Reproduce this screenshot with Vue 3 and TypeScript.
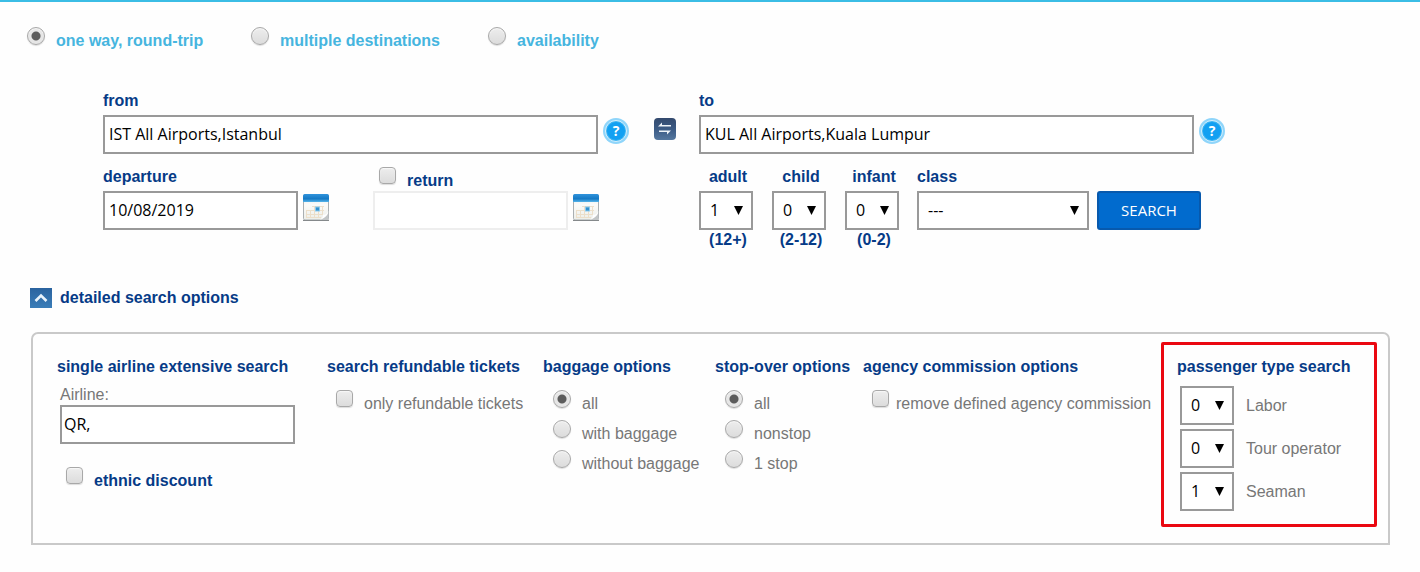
<script setup lang="ts">
import { ref } from 'vue'

const modes = ['one way, round-trip', 'multiple destinations', 'availability']
const mode = ref(modes[0])

const origin = ref('IST All Airports,Istanbul')
const destination = ref('KUL All Airports,Kuala Lumpur')
const departure = ref('10/08/2019')
const returning = ref(false)
const returnDate = ref('')

const passengers = ref([
  { id: 'adult', age: '(12+)', count: 1 },
  { id: 'child', age: '(2-12)', count: 0 },
  { id: 'infant', age: '(0-2)', count: 0 },
])
const cabin = ref('---')

const expanded = ref(true)
const airline = ref('QR,')
const ethnic = ref(false)
const refundable = ref(false)
const removeCommission = ref(false)

const baggageChoices = ['all', 'with baggage', 'without baggage']
const baggage = ref('all')
const stopChoices = ['all', 'nonstop', '1 stop']
const stops = ref('all')

const passengerTypes = ref([
  { id: 'labor', label: 'Labor', count: 0 },
  { id: 'tour', label: 'Tour operator', count: 0 },
  { id: 'seaman', label: 'Seaman', count: 1 },
])

function swap() {
  const previous = origin.value
  origin.value = destination.value
  destination.value = previous
}
</script>

<template>
  <main class="page">
    <svg class="defs" width="0" height="0" aria-hidden="true">
      <defs>
        <linearGradient id="cal-head" x1="0" y1="0" x2="0" y2="1">
          <stop offset="0" stop-color="#2f93dc" />
          <stop offset="0.6" stop-color="#1579c4" />
          <stop offset="1" stop-color="#55b4ea" />
        </linearGradient>
        <linearGradient id="cal-page" x1="0" y1="0" x2="0" y2="1">
          <stop offset="0" stop-color="#e3eaee" />
          <stop offset="0.4" stop-color="#fbfbf9" />
          <stop offset="1" stop-color="#eceee9" />
        </linearGradient>
        <linearGradient id="swap-bg" x1="0" y1="0" x2="0" y2="1">
          <stop offset="0" stop-color="#33496d" />
          <stop offset="0.5" stop-color="#3c5b85" />
          <stop offset="1" stop-color="#55779f" />
        </linearGradient>
        <linearGradient id="fold-bg" x1="0" y1="0" x2="0" y2="1">
          <stop offset="0" stop-color="#2a639f" />
          <stop offset="1" stop-color="#3a7db8" />
        </linearGradient>
        <symbol id="calendar" viewBox="0 0 26 27">
          <rect x="0.5" y="0.5" width="25" height="25.5" rx="1.5" fill="url(#cal-page)" stroke="#a9afb2" />
          <path d="M0 8V2Q0 0 2 0H24Q26 0 26 2V8Z" fill="url(#cal-head)" />
          <path d="M9 12.500H21M3 16.500H21M3 20.500H20M3 23.500H18M3.500 16V24M7.500 16V24M11.500 12V24M15.500 12V24M19.500 12V21" stroke="#ecdfca" fill="none" />
          <rect x="12" y="12.500" width="5" height="5" fill="#8fcbed" />
          <rect x="13" y="13.500" width="3" height="3" fill="#3291cf" />
          <path d="M18 26L25.500 18V26Z" fill="#c3c6c7" />
          <path d="M17 26Q20.500 23 20 20.500Q23 21.500 25.500 17Q25 23 17 26Z" fill="#fff" />
          <path d="M0 26.500H26" stroke="#85898b" />
        </symbol>
      </defs>
    </svg>

    <form @submit.prevent>
      <div class="modes" role="radiogroup" aria-label="trip type">
        <label v-for="m in modes" :key="m" class="toggle strong">
          <input v-model="mode" type="radio" name="mode" :value="m" />
          <span>{{ m }}</span>
        </label>
      </div>

      <div class="route">
        <section class="half">
          <div class="field">
            <label class="caption" for="origin">from</label>
            <div class="with-icon">
              <input id="origin" v-model="origin" class="box" type="text" />
              <button type="button" class="icon help" aria-label="help with origin">
                <svg width="26" height="26" viewBox="0 0 26 26">
                  <circle cx="13" cy="13" r="13" fill="#8fd5fa" />
                  <circle cx="13" cy="13" r="10.500" fill="#3cb4f3" stroke="#d8f1fd" />
                  <circle cx="13" cy="13" r="9" fill="#12a0f2" />
                  <text x="13" y="18" text-anchor="middle">?</text>
                </svg>
              </button>
            </div>
          </div>
          <div class="dates">
            <div class="field">
              <label class="caption" for="departure">departure</label>
              <div class="with-icon">
                <input id="departure" v-model="departure" class="box" type="text" />
                <button type="button" class="icon calendar" aria-label="choose departure date">
                  <svg width="26" height="27"><use href="#calendar" /></svg>
                </button>
              </div>
            </div>
            <div class="field">
              <div class="caption-toggle">
                <label class="toggle strong navy">
                  <input v-model="returning" type="checkbox" />
                  <span>return</span>
                </label>
              </div>
              <div class="with-icon">
                <input v-model="returnDate" class="box" type="text" aria-label="return date" :disabled="!returning" />
                <button type="button" class="icon calendar" aria-label="choose return date">
                  <svg width="26" height="27"><use href="#calendar" /></svg>
                </button>
              </div>
            </div>
          </div>
        </section>

        <button type="button" class="icon swap" aria-label="swap airports" @click="swap">
          <svg width="22" height="22" viewBox="0 0 22 22">
            <rect width="22" height="22" rx="4" fill="url(#swap-bg)" />
            <path d="M4 8.500L8 4.500V7H17V8.500Z" fill="#eef3f8" />
            <path d="M17 12.500H5V14H13V16.500Z" fill="#eef3f8" />
          </svg>
        </button>

        <section class="half">
          <div class="field">
            <label class="caption" for="destination">to</label>
            <div class="with-icon">
              <input id="destination" v-model="destination" class="box" type="text" />
              <button type="button" class="icon help" aria-label="help with destination">
                <svg width="26" height="26" viewBox="0 0 26 26">
                  <circle cx="13" cy="13" r="13" fill="#8fd5fa" />
                  <circle cx="13" cy="13" r="10.500" fill="#3cb4f3" stroke="#d8f1fd" />
                  <circle cx="13" cy="13" r="9" fill="#12a0f2" />
                  <text x="13" y="18" text-anchor="middle">?</text>
                </svg>
              </button>
            </div>
          </div>
          <div class="travel">
            <div class="counts">
              <div v-for="p in passengers" :key="p.id" class="count">
                <label class="caption" :for="p.id">{{ p.id }}</label>
                <span class="select">
                  <select :id="p.id" v-model="p.count" class="box">
                    <option v-for="n in 10" :key="n" :value="n - 1">{{ n - 1 }}</option>
                  </select>
                  <svg class="arrow" width="9" height="9" viewBox="0 0 9 9"><path d="M0 0H9L4.500 9Z" /></svg>
                </span>
                <span class="age">{{ p.age }}</span>
              </div>
            </div>
            <div class="cabin">
              <label class="caption" for="cabin">class</label>
              <span class="select">
                <select id="cabin" v-model="cabin" class="box">
                  <option>---</option>
                </select>
                <svg class="arrow" width="9" height="9" viewBox="0 0 9 9"><path d="M0 0H9L4.500 9Z" /></svg>
              </span>
            </div>
            <button type="submit" class="search">SEARCH</button>
          </div>
        </section>
      </div>

      <button type="button" class="fold" :aria-expanded="expanded" @click="expanded = !expanded">
        <svg width="22" height="20" viewBox="0 0 22 20">
          <rect width="22" height="20" fill="url(#fold-bg)" />
          <path d="M5.500 13L11 7.500L16.500 13" fill="none" stroke="#e9f3fb" stroke-width="2.600" />
        </svg>
        <span>detailed search options</span>
      </button>

      <div v-show="expanded" class="panel">
        <section class="column">
          <h2>single airline extensive search</h2>
          <div class="airline">
            <label for="airline">Airline:</label>
            <input id="airline" v-model="airline" class="box" type="text" />
          </div>
          <label class="toggle strong navy ethnic">
            <input v-model="ethnic" type="checkbox" />
            <span>ethnic discount</span>
          </label>
        </section>

        <section class="column">
          <h2>search refundable tickets</h2>
          <div class="choices">
            <label class="toggle">
              <input v-model="refundable" type="checkbox" />
              <span>only refundable tickets</span>
            </label>
          </div>
        </section>

        <section class="column">
          <h2>baggage options</h2>
          <div class="choices radios">
            <label v-for="c in baggageChoices" :key="c" class="toggle">
              <input v-model="baggage" type="radio" name="baggage" :value="c" />
              <span>{{ c }}</span>
            </label>
          </div>
        </section>

        <section class="column">
          <h2>stop-over options</h2>
          <div class="choices radios">
            <label v-for="c in stopChoices" :key="c" class="toggle">
              <input v-model="stops" type="radio" name="stops" :value="c" />
              <span>{{ c }}</span>
            </label>
          </div>
        </section>

        <section class="column">
          <h2>agency commission options</h2>
          <div class="choices">
            <label class="toggle tight">
              <input v-model="removeCommission" type="checkbox" />
              <span>remove defined agency commission</span>
            </label>
          </div>
        </section>

        <section class="column marked">
          <h2>passenger type search</h2>
          <div class="types">
            <div v-for="t in passengerTypes" :key="t.id" class="type">
              <span class="select">
                <select :id="t.id" v-model="t.count" class="box">
                  <option v-for="n in 10" :key="n" :value="n - 1">{{ n - 1 }}</option>
                </select>
                <svg class="arrow" width="9" height="9" viewBox="0 0 9 9"><path d="M0 0H9L4.500 9Z" /></svg>
              </span>
              <label :for="t.id">{{ t.label }}</label>
            </div>
          </div>
        </section>
      </div>
    </form>
  </main>
</template>

<style>
body {
  background: #fefefe;
}
</style>

<style scoped>
* {
  box-sizing: border-box;
}

.page {
  border-top: 2px solid #3bbde5;
  padding: 25px 30px 27px 27px;
  font: 16px/20px "Liberation Sans", Arial, sans-serif;
  color: #777;
}

.defs {
  position: absolute;
}

button {
  padding: 0;
  border: 0;
  background: none;
  cursor: pointer;
}

svg {
  display: block;
}

.toggle {
  display: flex;
  align-items: flex-start;
  gap: 11px;
  white-space: nowrap;
}

.toggle span {
  padding-top: 4px;
}

.toggle.tight {
  gap: 7px;
}

.strong {
  font-weight: bold;
  color: #46b5df;
}

.navy,
.caption,
.age,
.fold,
h2 {
  font-weight: bold;
  color: #063b87;
}

input[type="radio"],
input[type="checkbox"] {
  appearance: none;
  flex: none;
  width: 17px;
  height: 17px;
  margin: 0;
  border: 1px solid #a8a8a8;
  border-radius: 4px;
  background: linear-gradient(#ededed, #dcdcdc);
  box-shadow: inset 0 1px 1px #f8f8f8, 0 1px 1px #ddd;
}

input[type="radio"] {
  width: 18px;
  height: 18px;
  border-radius: 50%;
}

input[type="radio"]:checked {
  background: radial-gradient(circle, #5c5c5c 4px, #e6e6e6 5px);
}

input[type="checkbox"]:checked {
  background: #5c5c5c;
}

.modes {
  display: grid;
  grid-template-columns: 224px 237px auto;
}

.route {
  display: grid;
  grid-template-columns: 1fr 70px 1fr;
  margin: 40px 165px 0 76px;
}

.half {
  display: flex;
  flex-direction: column;
  gap: 13px;
  min-width: 0;
}

.caption {
  display: block;
  margin-bottom: 4px;
}

.caption-toggle {
  height: 24px;
  padding-left: 6px;
}

.with-icon {
  display: flex;
  gap: 5px;
}

.box {
  width: 100%;
  min-width: 0;
  height: 39px;
  margin: 0;
  padding: 0 4px 2px;
  border: 2px solid #999;
  border-radius: 0;
  background: #fff;
  color: #000;
  font: 16px/20px "Trebuchet MS", "Open Sans", sans-serif;
}

.box:disabled {
  border-color: #eee;
}

.icon {
  flex: none;
  align-self: flex-start;
}

.help {
  margin-top: 3px;
}

.help text {
  font: bold 14px "Open Sans", sans-serif;
  fill: #fff;
}

.calendar {
  margin-top: 3px;
}

.swap {
  margin: 27px 0 0 25px;
  justify-self: start;
}

.dates {
  display: grid;
  grid-template-columns: 226px 226px;
  gap: 44px;
}

.travel {
  display: flex;
  align-items: flex-start;
  margin-right: 24px;
}

.counts {
  display: flex;
  gap: 19px;
  margin-right: 18px;
}

.count {
  display: flex;
  flex-direction: column;
  align-items: center;
  width: 54px;
  white-space: nowrap;
}

.count .caption,
.age {
  padding-left: 4px;
}

.select {
  display: block;
  position: relative;
  width: 54px;
}

.select select {
  display: block;
  appearance: none;
  padding: 0 0 2px 9px;
}

.arrow {
  position: absolute;
  right: 10px;
  top: 15px;
  pointer-events: none;
}

.cabin {
  flex: 1;
  margin-right: 8px;
}

.cabin .select {
  width: 100%;
}

.search {
  width: 104px;
  height: 39px;
  margin-top: 24px;
  padding-bottom: 2px;
  border: 2px solid #0759ad;
  border-radius: 3px;
  background: #016bce;
  color: #fff;
  font: 15px/20px "Trebuchet MS", "Open Sans", sans-serif;
}

.fold {
  display: flex;
  gap: 8px;
  margin: 38px 0 24px 3px;
  font: bold 16px/20px "Liberation Sans", Arial, sans-serif;
}

.panel {
  display: grid;
  grid-template-columns:
    minmax(0, 270fr) minmax(0, 216fr) minmax(0, 172fr)
    minmax(0, 148fr) minmax(0, 298fr) minmax(0, 216fr);
  margin-left: 4px;
  padding: 8px 11px 16px 24px;
  border: 2px solid #c9c9c9;
  border-radius: 7px 7px 0 0;
}

.column {
  padding-top: 15px;
}

h2 {
  margin: 0;
  font-size: 16px;
  line-height: 20px;
  white-space: nowrap;
}

.airline {
  margin: 8px 32px 0 3px;
}

.airline label {
  display: block;
}

.airline .box {
  display: block;
  padding: 0 2px 2px;
}

.ethnic {
  margin: 23px 0 0 9px;
}

.choices {
  display: grid;
  gap: 6px;
  padding: 13px 0 0 9px;
}

.radios {
  padding-left: 10px;
}

.marked {
  padding: 12px 13px 13px;
  border: 3px solid #ea0710;
  border-radius: 2px;
}

.types {
  display: grid;
  gap: 4px;
  padding: 9px 0 0 3px;
}

.type {
  display: flex;
  align-items: center;
  gap: 12px;
}
</style>
